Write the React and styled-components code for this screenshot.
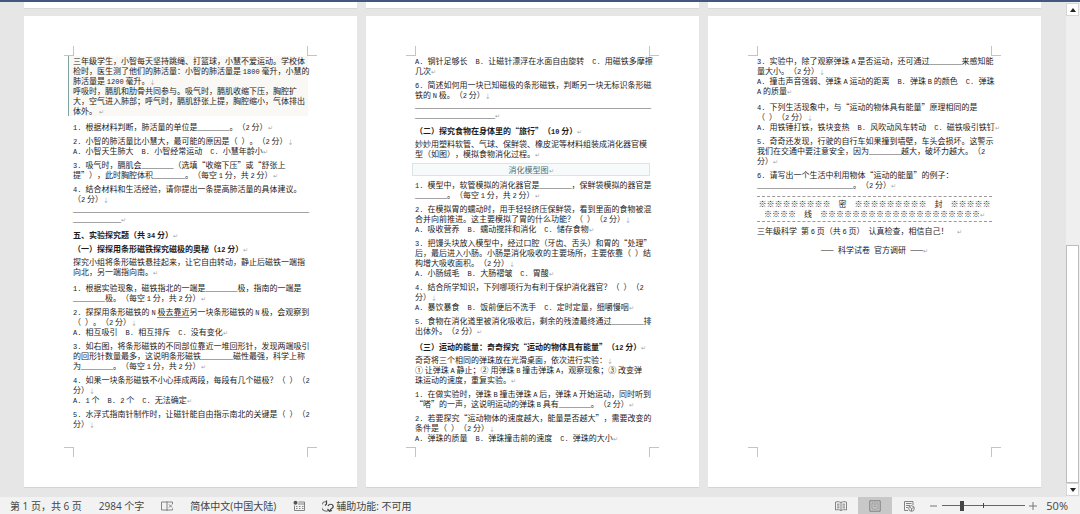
import React from 'react';
import styled, { createGlobalStyle } from 'styled-components';

const GlobalStyle = createGlobalStyle`
  * { box-sizing: border-box; }
  body {
    margin: 0;
    background: #e6e6e6;
    font-family: "Noto Sans CJK SC", "Noto Sans", sans-serif;
  }
  button { font: inherit; color: inherit; border: 0; padding: 0; background: none; }
`;

const Shell = styled.div`
  display: flex;
  flex-direction: column;
  min-height: 100vh;
  border-top: 2px solid #43567f;
`;

const Workspace = styled.div`
  flex: 1;
  display: flex;
  background: #e6e6e6;
`;

const Canvas = styled.main`
  flex: 1;
  min-width: 0;
  display: flex;
  flex-direction: column;
  gap: 7px;
  padding: 0 25px 9px 24px;
`;

const SheetRow = styled.div`
  display: flex;
  gap: 9px;
  flex: ${(p) => (p.$grow ? '1' : 'none')};
`;

const SheetEdge = styled.div`
  flex: 1 1 0;
  height: 7px;
  background: #fff;
  border-bottom: 1px solid #d8d8d8;
`;

const Sheet = styled.article`
  flex: 1 1 0;
  min-width: 0;
  display: flex;
  flex-direction: column;
  background: #fff;
  border-bottom: 1px solid #d4d4d4;
`;

const MarkRow = styled.div`
  display: flex;
  justify-content: space-between;
  margin: ${(p) => (p.$bottom ? '0 40px 30px' : '30px 40px 0')};
`;

const CropMark = styled.span`
  width: 10px;
  height: 10px;
  border: 0 solid #c4c4c4;
  border-width: ${(p) => p.$sides};
`;

const Body = styled.div`
  flex: 1;
  padding: 0 49px;
  font-size: 8px;
  line-height: 10px;
  color: #1c1c1c;
  white-space: nowrap;
  text-spacing-trim: space-all;
`;

const Paragraph = styled.p`
  margin: 0 0 ${(p) => (p.$loose ? 6 : 4)}px;
  text-align: ${(p) => (p.$center ? 'center' : 'left')};
`;

const Passage = styled(Paragraph)`
  margin-left: -5px;
  padding-left: 4px;
  border-left: 1px solid #7fa39f;
  background: #f9f8f5;
`;

const SectionTitle = styled.h2`
  margin: 0 0 4px;
  font-size: 8px;
  line-height: 10px;
  font-weight: 700;
`;

const SubTitle = styled.h3`
  margin: 0 0 3px;
  font-size: 8px;
  line-height: 10px;
  font-weight: 700;
`;

const FigureCaption = styled.p`
  margin: 0 0 4px -3px;
  border: 1px solid #dbe5e9;
  background: #f6fafb;
  color: #4f6d72;
  line-height: 11px;
  text-align: center;
`;

const SealLine = styled.p`
  margin: 0 0 4px;
  padding: 2px 0;
  border: 0 dashed #9a9a9a;
  border-width: 1px 0;
  text-align: center;
`;

const Closing = styled(Paragraph)`
  padding-top: 3px;
`;

const Line = styled.span`
  display: block;
`;

// runs in another font must not stretch the line box
const Latin = styled.span`
  font-family: "Liberation Mono", monospace;
  font-size: 7px;
  line-height: 0;
`;

const Blank = styled.span`
  font-family: "Liberation Serif", serif;
  line-height: 0;
`;

const Checked = styled.span`
  border-bottom: 1px solid #6b93b5;
`;

const Glyph = styled.span`
  font-size: 6px;
  font-weight: 400;
  line-height: 0;
  color: #a3a3a3;
`;

// splits a line into blanks, latin runs, proofing marks and end glyphs
const pattern = /(_+|[A-Za-z0-9]+(?:\. )?|~[^~]+~|[↵↓])/;

function RichLine({ text }) {
  return (
    <Line>
      {text.split(pattern).map((part, index) => {
        if (!part) return null;
        if (part[0] === '_') return <Blank key={index}>{part}</Blank>;
        if (part[0] === '~') return <Checked key={index}>{part.slice(1, -1)}</Checked>;
        if (part === '↵' || part === '↓') return <Glyph key={index}>{part}</Glyph>;
        if (/^[A-Za-z0-9]/.test(part)) return <Latin key={index}>{part}</Latin>;
        return part;
      })}
    </Line>
  );
}

const kinds = {
  text: Paragraph,
  passage: Passage,
  section: SectionTitle,
  sub: SubTitle,
  caption: FigureCaption,
  seal: SealLine,
  closing: Closing,
};

const pages = [
  [
    {
      kind: 'passage',
      loose: true,
      lines: [
        '三年级学生，小智每天坚持跳绳、打篮球，小慧不爱运动。学校体',
        '检时，医生测了他们的肺活量：小智的肺活量是 1800 毫升，小慧的',
        '肺活量是 1200 毫升。↓',
        '呼吸时，膈肌和肋骨共同参与。吸气时，膈肌收缩下压，胸腔扩',
        '大，空气进入肺部；呼气时，膈肌舒张上提，胸腔缩小，气体排出',
        '体外。 ↵',
      ],
    },
    { lines: ['1. 根据材料判断，肺活量的单位是________。（2 分）↵'] },
    {
      lines: [
        '2. 小智的肺活量比小慧大，最可能的原因是（\u2002）。（2 分）↓',
        'A. 小智天生肺大　B. 小智经常运动　C. 小慧年龄小↵',
      ],
    },
    {
      lines: [
        '3. 吸气时，膈肌会________（选填“收缩下压”或“舒张上',
        '提”），此时胸腔体积________。（每空 1 分，共 2 分）↵',
      ],
    },
    {
      loose: true,
      lines: [
        '4. 结合材料和生活经验，请你提出一条提高肺活量的具体建议。',
        '（2 分）↓',
        '_'.repeat(59),
        '____________↵',
      ],
    },
    { kind: 'section', lines: ['五、实验探究题（共 34 分）↵'] },
    { kind: 'sub', lines: ['（一）探探用条形磁铁探究磁极的奥秘（12 分）↵'] },
    {
      loose: true,
      lines: [
        '探究小组将条形磁铁悬挂起来，让它自由转动，静止后磁铁一端指',
        '向北，另一端指向南。↵',
      ],
    },
    {
      lines: [
        '1. 根据实验现象，磁铁指北的一端是________极，指南的一端是',
        '________极。（每空 1 分，共 2 分）↵',
      ],
    },
    {
      lines: [
        '2. 探探用条形磁铁的 N ~极去靠近~另一块条形磁铁的 N 极，会观察到',
        '（\u2002）。（2 分）↓',
        'A. 相互吸引　B. 相互排斥　C. 没有变化↵',
      ],
    },
    {
      lines: [
        '3. 如右图，将条形磁铁的不同部位靠近一堆回形针，发现两端吸引',
        '的回形针数量最多，这说明条形磁铁________磁性最强，科学上称',
        '为________。（每空 1 分，共 2 分）↵',
      ],
    },
    {
      lines: [
        '4. 如果一块条形磁铁不小心摔成两段，每段有几个磁极？（\u2002）（2',
        '分）↓',
        'A. 1 个　B. 2 个　C. 无法确定↵',
      ],
    },
    {
      lines: [
        '5. 水浮式指南针制作时，让磁针能自由指示南北的关键是（\u2002）（2',
        '分）↓',
      ],
    },
  ],
  [
    { lines: ['A. 钢针足够长　B. 让磁针漂浮在水面自由旋转　C. 用磁铁多摩擦', '几次↵'] },
    {
      loose: true,
      lines: [
        '6. 简述如何用一块已知磁极的条形磁铁，判断另一块无标识条形磁',
        '铁的 N 极。（2 分）↓',
        '_'.repeat(59),
        '____________________↵',
      ],
    },
    { kind: 'sub', lines: ['（二）探究食物在身体里的“旅行”（10 分）↵'] },
    {
      lines: [
        '妙妙用塑料软管、气球、保鲜袋、橡皮泥等材料组装成消化器官模',
        '型（如图），模拟食物消化过程。↵',
      ],
    },
    { kind: 'caption', lines: ['消化模型图↵'] },
    {
      lines: [
        '1. 模型中，软管模拟的消化器官是________，保鲜袋模拟的器官是',
        '________。（每空 1 分，共 2 分）↵',
      ],
    },
    {
      lines: [
        '2. 在模拟胃的蠕动时，用手轻轻挤压保鲜袋，看到里面的食物被混',
        '合并向前推进。这主要模拟了胃的什么功能？（\u2002）（2 分）↓',
        'A. 吸收营养　B. 蠕动搅拌和消化　C. 储存食物↵',
      ],
    },
    {
      lines: [
        '3. 把馒头块放入模型中，经过口腔（牙齿、舌头）和胃的“处理”',
        '后，最后进入小肠。小肠是消化吸收的主要场所，主要依靠（\u2002）结',
        '构增大吸收面积。（2 分）↓',
        'A. 小肠绒毛　B. 大肠褶皱　C. 胃酸↵',
      ],
    },
    {
      lines: [
        '4. 结合所学知识，下列哪项行为有利于保护消化器官？（\u2002）（2',
        '分）↓',
        'A. 暴饮暴食　B. 饭前便后不洗手　C. 定时定量，细嚼慢咽↵',
      ],
    },
    {
      loose: true,
      lines: [
        '5. 食物在消化道里被消化吸收后，剩余的残渣最终通过________排',
        '出体外。（2 分）↵',
      ],
    },
    { kind: 'sub', lines: ['（三）运动的能量：奇奇探究“运动的物体具有能量”（12 分）↵'] },
    {
      lines: [
        '奇奇将三个相同的弹珠放在光滑桌面，依次进行实验：↓',
        '① 让弹珠 A 静止；② 用弹珠 B 撞击弹珠 A，观察现象；③ 改变弹',
        '珠运动的速度，重复实验。↵',
      ],
    },
    {
      lines: [
        '1. 在做实验时，弹珠 B 撞击弹珠 A 后，弹珠 A 开始运动，同时听到',
        '“嗒”的一声，这说明运动的弹珠 B 具有________。（2 分）↵',
      ],
    },
    {
      lines: [
        '2. 若要探究“运动物体的速度越大，能量是否越大”，需要改变的',
        '条件是（\u2002）（2 分）↓',
        'A. 弹珠的质量　B. 弹珠撞击前的速度　C. 弹珠的大小↵',
      ],
    },
  ],
  [
    {
      loose: true,
      lines: [
        '3. 实验中，除了观察弹珠 A 是否运动，还可通过________来感知能',
        '量大小。（2 分）↓',
        'A. 撞击声音强弱、弹珠 A 运动的距离　B. 弹珠 B 的颜色　C. 弹珠',
        'A 的质量↵',
      ],
    },
    {
      lines: [
        '4. 下列生活现象中，与“运动的物体具有能量”原理相同的是',
        '（\u2002）（2 分）↓',
        'A. 用铁锤打铁，铁块变热　B. 风吹动风车转动　C. 磁铁吸引铁钉↵',
      ],
    },
    {
      lines: [
        '5. 奇奇还发现，行驶的自行车如果撞到墙壁，车头会损坏。这警示',
        '我们在交通中要注意安全，因为________越大，破坏力越大。（2',
        '分）↵',
      ],
    },
    {
      loose: true,
      lines: ['6. 请写出一个生活中利用物体“运动的能量”的例子：', '________________________。（2 分）↵'],
    },
    {
      kind: 'seal',
      lines: [
        `${'※'.repeat(9)}　密　${'※'.repeat(9)}　封　${'※'.repeat(5)}`,
        `${'※'.repeat(4)}　线　${'※'.repeat(20)}↵`,
      ],
    },
    { loose: true, lines: ['三年级科学\u2002第 6 页（共 6 页）\u2002认真检查，相信自己！　↵'] },
    { kind: 'closing', center: true, lines: ['——\u2002科学试卷\u2002官方调研\u2002——↵'] },
  ],
];

function Page({ blocks }) {
  return (
    <Sheet>
      <MarkRow>
        <CropMark $sides="0 1px 1px 0" />
        <CropMark $sides="0 0 1px 1px" />
      </MarkRow>
      <Body>
        {blocks.map((block, index) => {
          const Block = kinds[block.kind || 'text'];
          return (
            <Block key={index} $loose={block.loose} $center={block.center}>
              {block.lines.map((line, i) => (
                <RichLine key={i} text={line} />
              ))}
            </Block>
          );
        })}
      </Body>
      <MarkRow $bottom>
        <CropMark $sides="1px 1px 0 0" />
        <CropMark $sides="1px 0 0 1px" />
      </MarkRow>
    </Sheet>
  );
}

// scrollbar

const Scrollbar = styled.div`
  width: 14px;
  display: flex;
  flex-direction: column;
  padding: 1px 1px 1px 0;
  background: #efefef;
`;

const ScrollButton = styled.button`
  height: 13px;
  display: flex;
  align-items: center;
  justify-content: center;
  background: #fff;
  border: 1px solid #d6d6d6;
`;

const ScrollTrack = styled.div`
  flex: 1;
  display: flex;
  flex-direction: column;
  justify-content: flex-end;
`;

const ScrollThumb = styled.div`
  height: 51%;
  background: #fff;
  border: 1px solid #bdbdbd;
`;

// status bar

const StatusBar = styled.footer`
  height: 17px;
  display: flex;
  align-items: center;
  justify-content: space-between;
  padding: 0 12px 0 10px;
  background: #f2f2f2;
  color: #444;
  font-family: "Open Sans", "Noto Sans CJK SC", sans-serif;
  font-size: 10px;
  line-height: 16px;
  white-space: nowrap;
`;

const StatusGroup = styled.div`
  display: flex;
  align-items: center;
  height: 100%;
  gap: ${(p) => p.$gap}px;
`;

const StatusButton = styled.button`
  display: flex;
  align-items: center;
  gap: 2px;
  line-height: 16px;
`;

const ViewButton = styled.button`
  width: 34px;
  height: 100%;
  display: flex;
  align-items: center;
  justify-content: center;
  background: ${(p) => (p.$active ? '#c8c8c8' : 'transparent')};
`;

const ZoomButton = styled.button`
  width: 8px;
  height: 16px;
  display: flex;
  align-items: center;
`;

const ZoomSlider = styled.input`
  appearance: none;
  width: 83px;
  height: 11px;
  margin: 0;
  background:
    linear-gradient(#444, #444) center / 1px 5px no-repeat,
    linear-gradient(#666, #666) center / 100% 1px no-repeat;
  &::-webkit-slider-thumb {
    appearance: none;
    width: 4px;
    height: 10px;
    background: #444;
  }
`;

const ZoomLabel = styled.button`
  margin-left: 5px;
  font-size: 11px;
`;

const Icon = ({ children, size = 12 }) => (
  <svg width={size} height={size} viewBox="0 0 12 12" fill="none" stroke="#777" strokeWidth="0.9" aria-hidden="true">
    {children}
  </svg>
);

function App() {
  return (
    <>
      <GlobalStyle />
      <Shell>
        <Workspace>
          <Canvas>
            <SheetRow>
              {pages.map((_, index) => (
                <SheetEdge key={index} />
              ))}
            </SheetRow>
            <SheetRow $grow>
              {pages.map((blocks, index) => (
                <Page key={index} blocks={blocks} />
              ))}
            </SheetRow>
          </Canvas>
          <Scrollbar>
            <ScrollButton aria-label="向上滚动">
              <svg width="6" height="4" viewBox="0 0 6 4"><path d="M0 4L3 0l3 4z" fill="#222" /></svg>
            </ScrollButton>
            <ScrollTrack>
              <ScrollThumb />
            </ScrollTrack>
            <ScrollButton aria-label="向下滚动">
              <svg width="6" height="4" viewBox="0 0 6 4"><path d="M0 0l3 4 3-4z" fill="#222" /></svg>
            </ScrollButton>
          </Scrollbar>
        </Workspace>
        <StatusBar>
          <StatusGroup $gap={17}>
            <StatusButton>第 1 页，共 6 页</StatusButton>
            <StatusButton>2984 个字</StatusButton>
            <StatusButton aria-label="校对">
              <Icon>
                <path d="M6 2H.5v8H6M6 1.500v9.500M6 2h5.500v2M6 10h5.500V8.500" />
                <path d="M8 4.500l3 3M11 4.500l-3 3" />
              </Icon>
            </StatusButton>
            <StatusButton>简体中文(中国大陆)</StatusButton>
            <StatusButton aria-label="宏录制">
              <Icon>
                <circle cx="2.500" cy="2.800" r="2" fill="#555" stroke="none" />
                <path d="M5.500 2h6v8.500h-10V5.500M5 4h6.500" />
                <path d="M3 6.500h1.500M6 6.500h1.500M9 6.500h1.500M3 8.500h1.500M6 8.500h1.500M9 8.500h1.500" />
              </Icon>
            </StatusButton>
            <StatusButton>
              <Icon>
                <path d="M4 1.500A4.800 4.800 0 1 0 6.500 10.500" strokeWidth="1.200" />
                <path d="M4.500 .5v3.500L3 5.500M6 6.200a2.600 2.200 0 1 1 3.500 2.300L7.500 11.200M5.500 9l2 2.200 2.500-.7" stroke="#444" strokeWidth="1.200" />
              </Icon>
              辅助功能: 不可用
            </StatusButton>
          </StatusGroup>
          <StatusGroup $gap={4}>
            <StatusGroup $gap={0}>
              <ViewButton aria-label="阅读视图">
                <Icon>
                  <path d="M6 2.500v8M6 2.500C4.500 1.500 2 1.500.5 2v8c1.500-.5 4-.5 5.500.5 1.500-1 4-1 5.500-.5V2C10 1.500 7.500 1.500 6 2.500z" />
                  <path d="M2 4.200h2.500M2 6h2.500M2 7.800h2.500M7.500 4.200H10M7.500 6H10M7.500 7.800H10" />
                </Icon>
              </ViewButton>
              <ViewButton $active aria-label="页面视图">
                <Icon>
                  <path d="M.8.8h10.400v10.400H.8z" />
                  <path d="M3 3h6v6H3zM4.500 4.800h3M4.500 6.500h3" stroke="#999" />
                </Icon>
              </ViewButton>
              <ViewButton aria-label="Web 版式视图">
                <Icon>
                  <path d="M5 10.500H1.500v-9H10V5M3 3.500h5.500M3 5.500h4M3 7.500h2" />
                  <circle cx="8.500" cy="8.500" r="2.800" />
                  <path d="M6.500 7l2 1.500v2.500M8.500 8.500l2.500-1" />
                </Icon>
              </ViewButton>
            </StatusGroup>
            <ZoomButton aria-label="缩小">
              <svg width="8" height="8" viewBox="0 0 8 8"><path d="M0 4h7" stroke="#777" /></svg>
            </ZoomButton>
            <ZoomSlider type="range" min="0" max="100" defaultValue="22" aria-label="显示比例" />
            <ZoomButton aria-label="放大">
              <svg width="8" height="8" viewBox="0 0 8 8"><path d="M0 4h8M4 0v8" stroke="#777" /></svg>
            </ZoomButton>
            <ZoomLabel>50%</ZoomLabel>
          </StatusGroup>
        </StatusBar>
      </Shell>
    </>
  );
}

export default App;
